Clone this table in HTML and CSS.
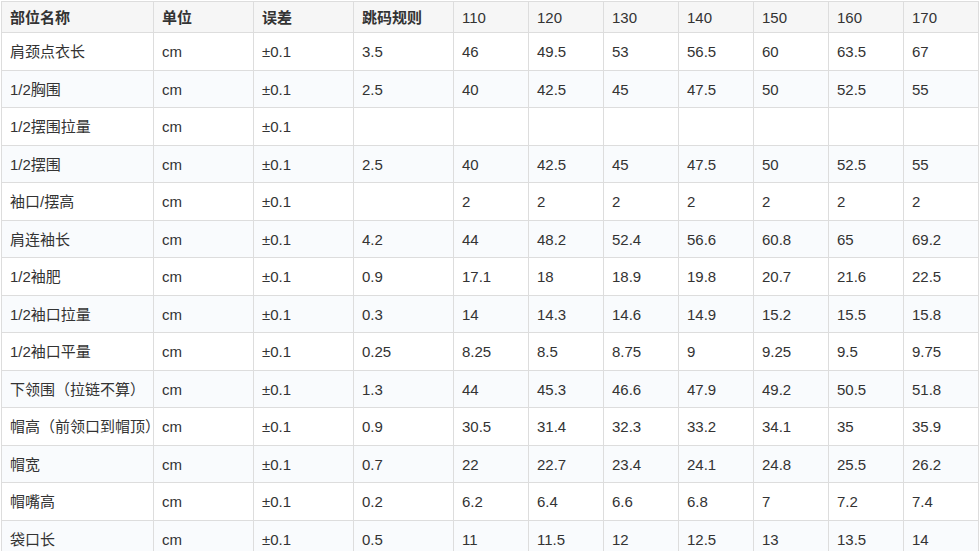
FILE: index.html
```html
<!DOCTYPE html>
<html lang="zh-CN">
<head>
<meta charset="utf-8">
<title>尺码表</title>
<link rel="stylesheet" href="styles.css">
</head>
<body>
<div class="wrap">
<table class="size-table">
<colgroup>
<col class="c-name"><col class="c-mid"><col class="c-mid"><col class="c-mid">
<col class="c-size"><col class="c-size"><col class="c-size"><col class="c-size"><col class="c-size"><col class="c-size"><col class="c-size">
</colgroup>
<thead>
<tr><th>部位名称</th><th>单位</th><th>误差</th><th>跳码规则</th><th class="num">110</th><th class="num">120</th><th class="num">130</th><th class="num">140</th><th class="num">150</th><th class="num">160</th><th class="num">170</th></tr>
</thead>
<tbody>
<tr><td>肩颈点衣长</td><td>cm</td><td>±0.1</td><td>3.5</td><td>46</td><td>49.5</td><td>53</td><td>56.5</td><td>60</td><td>63.5</td><td>67</td></tr>
<tr><td>1/2胸围</td><td>cm</td><td>±0.1</td><td>2.5</td><td>40</td><td>42.5</td><td>45</td><td>47.5</td><td>50</td><td>52.5</td><td>55</td></tr>
<tr><td>1/2摆围拉量</td><td>cm</td><td>±0.1</td><td></td><td></td><td></td><td></td><td></td><td></td><td></td><td></td></tr>
<tr><td>1/2摆围</td><td>cm</td><td>±0.1</td><td>2.5</td><td>40</td><td>42.5</td><td>45</td><td>47.5</td><td>50</td><td>52.5</td><td>55</td></tr>
<tr><td>袖口/摆高</td><td>cm</td><td>±0.1</td><td></td><td>2</td><td>2</td><td>2</td><td>2</td><td>2</td><td>2</td><td>2</td></tr>
<tr><td>肩连袖长</td><td>cm</td><td>±0.1</td><td>4.2</td><td>44</td><td>48.2</td><td>52.4</td><td>56.6</td><td>60.8</td><td>65</td><td>69.2</td></tr>
<tr><td>1/2袖肥</td><td>cm</td><td>±0.1</td><td>0.9</td><td>17.1</td><td>18</td><td>18.9</td><td>19.8</td><td>20.7</td><td>21.6</td><td>22.5</td></tr>
<tr><td>1/2袖口拉量</td><td>cm</td><td>±0.1</td><td>0.3</td><td>14</td><td>14.3</td><td>14.6</td><td>14.9</td><td>15.2</td><td>15.5</td><td>15.8</td></tr>
<tr><td>1/2袖口平量</td><td>cm</td><td>±0.1</td><td>0.25</td><td>8.25</td><td>8.5</td><td>8.75</td><td>9</td><td>9.25</td><td>9.5</td><td>9.75</td></tr>
<tr><td>下领围（拉链不算）</td><td>cm</td><td>±0.1</td><td>1.3</td><td>44</td><td>45.3</td><td>46.6</td><td>47.9</td><td>49.2</td><td>50.5</td><td>51.8</td></tr>
<tr><td>帽高（前领口到帽顶）</td><td>cm</td><td>±0.1</td><td>0.9</td><td>30.5</td><td>31.4</td><td>32.3</td><td>33.2</td><td>34.1</td><td>35</td><td>35.9</td></tr>
<tr><td>帽宽</td><td>cm</td><td>±0.1</td><td>0.7</td><td>22</td><td>22.7</td><td>23.4</td><td>24.1</td><td>24.8</td><td>25.5</td><td>26.2</td></tr>
<tr><td>帽嘴高</td><td>cm</td><td>±0.1</td><td>0.2</td><td>6.2</td><td>6.4</td><td>6.6</td><td>6.8</td><td>7</td><td>7.2</td><td>7.4</td></tr>
<tr><td>袋口长</td><td>cm</td><td>±0.1</td><td>0.5</td><td>11</td><td>11.5</td><td>12</td><td>12.5</td><td>13</td><td>13.5</td><td>14</td></tr>
</tbody>
</table>
</div>
</body>
</html>
```
FILE: styles.css
```css
html, body {
  margin: 0;
  padding: 0;
  background: #ffffff;
}
.wrap {
  padding: 1px 0 0 1px;
  overflow: hidden;
}
.size-table {
  border-collapse: collapse;
  table-layout: fixed;
  width: 977px;
  font-family: "Liberation Sans", "Noto Sans CJK SC", sans-serif;
  font-size: 15px;
  color: #333333;
  text-spacing-trim: space-all;
}
.c-name { width: 152px; }
.c-mid { width: 100px; }
.c-size { width: 75px; }
.size-table th,
.size-table td {
  border: 1px solid #dddddd;
  padding: 2px 0 0 8px;
  text-align: left;
  vertical-align: middle;
  white-space: nowrap;
  overflow: hidden;
  line-height: 20px;
}
.size-table thead tr {
  height: 31px;
}
.size-table tbody tr {
  height: 37.5px;
}
.size-table th {
  background: #f6f6f6;
  font-weight: bold;
}
.size-table th.num {
  font-weight: normal;
}
.size-table tbody tr:nth-child(even) td {
  background: #f9fbfd;
}
```
